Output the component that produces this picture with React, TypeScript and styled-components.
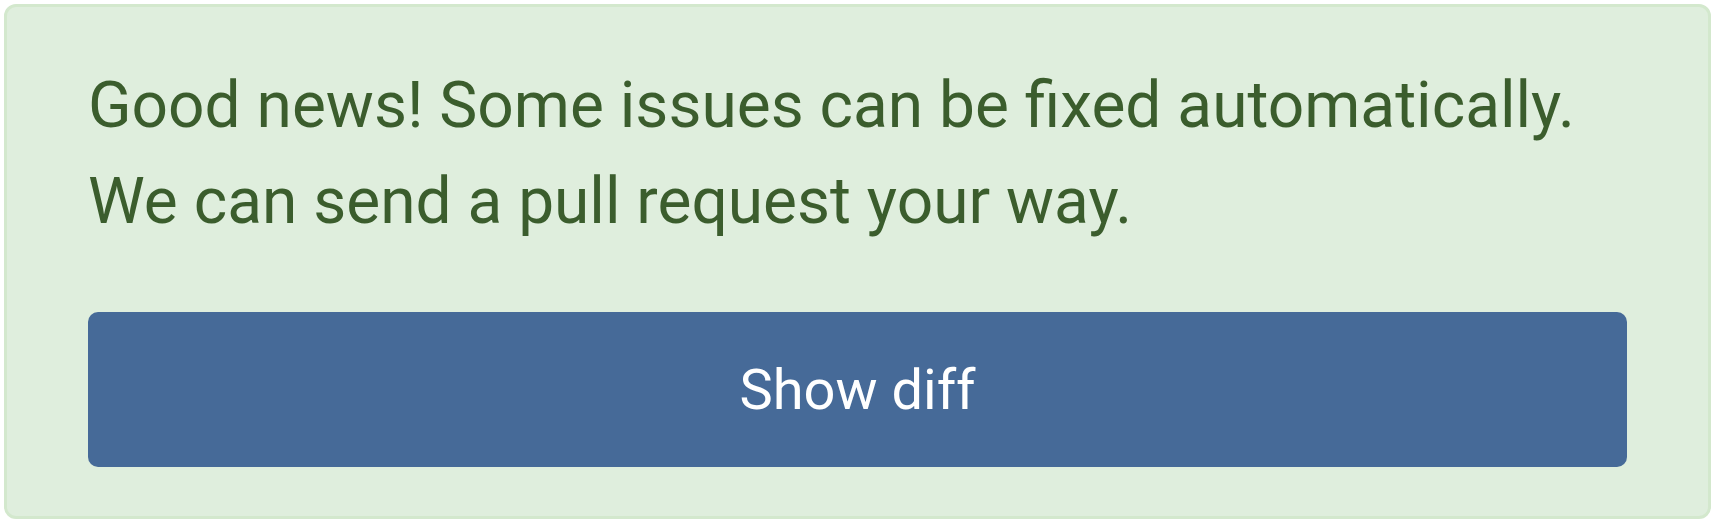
import React, { ReactElement } from "react";
import styled, { createGlobalStyle } from "styled-components";

const GlobalStyle = createGlobalStyle`
  html, body {
    margin: 0;
    padding: 0;
    background: #ffffff;
  }

  body {
    font-family: Roboto, "Liberation Sans", sans-serif;
  }
`;

export default function App(): ReactElement {
  return (
    <Page>
      <GlobalStyle />
      <Notice>
        <Message>
          Good news! Some issues can be fixed automatically.
          <br />
          We can send a pull request your way.
        </Message>
        <DiffButton type="button">Show diff</DiffButton>
      </Notice>
    </Page>
  );
}

const Page = styled.div`
  padding: 4px 4px 3px 4px;
`;

const Notice = styled.section`
  display: flex;
  flex-direction: column;
  gap: 62px;
  padding: 51px 81px 49px 81px;

  background: #dfeedd;
  border: 3px solid #d3e8cd;
  border-radius: 12px;
`;

const Message = styled.p`
  margin: 0;
  font-size: 64px;
  line-height: 96px;
  color: #3b5d2d;
`;

const DiffButton = styled.button`
  height: 155px;
  width: 100%;
  border: none;
  border-radius: 10px;
  background: #466a98;
  color: #ffffff;

  font-family: Roboto, "Liberation Sans", sans-serif;
  font-size: 56px;
  cursor: pointer;
`;
